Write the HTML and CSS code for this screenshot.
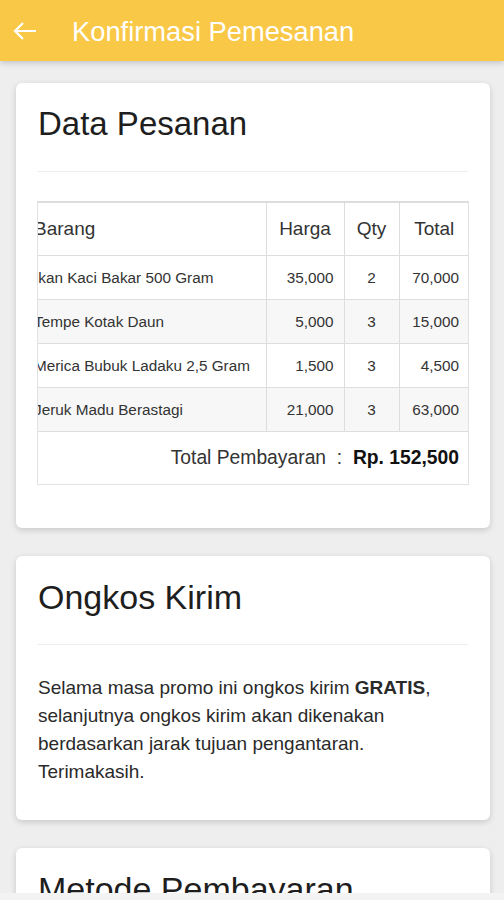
FILE: index.html
```html
<!DOCTYPE html>
<html lang="id">
<head>
    <meta charset="UTF-8">
    <meta name="viewport" content="width=device-width, initial-scale=1.0">
    <title>Konfirmasi Pemesanan</title>
    <link rel="stylesheet" href="styles.css">
</head>
<body>
    <div class="topbar">
        <svg class="back" width="24" height="18" viewBox="0 0 24 18">
            <path d="M23 9H2M10 1L2 9l8 8" fill="none" stroke="#fff" stroke-width="2.2"/>
        </svg>
        <span class="topbar-title">Konfirmasi Pemesanan</span>
    </div>

    <div class="content">
        <div class="card">
            <h2 class="card-title">Data Pesanan</h2>
            <div class="line"></div>
            <div class="order">
                <table class="items">
                    <colgroup>
                        <col class="c-name"><col class="c-price"><col class="c-qty"><col class="c-total">
                    </colgroup>
                    <thead>
                        <tr><th class="left">Barang</th><th>Harga</th><th>Qty</th><th>Total</th></tr>
                    </thead>
                    <tbody>
                        <tr><td>Ikan Kaci Bakar 500 Gram</td><td class="num">35,000</td><td class="mid">2</td><td class="num">70,000</td></tr>
                        <tr><td>Tempe Kotak Daun</td><td class="num">5,000</td><td class="mid">3</td><td class="num">15,000</td></tr>
                        <tr><td>Merica Bubuk Ladaku 2,5 Gram</td><td class="num">1,500</td><td class="mid">3</td><td class="num">4,500</td></tr>
                        <tr><td>Jeruk Madu Berastagi</td><td class="num">21,000</td><td class="mid">3</td><td class="num">63,000</td></tr>
                    </tbody>
                </table>
                <div class="sum">Total Pembayaran &nbsp;:&nbsp; <b>Rp. 152,500</b></div>
            </div>
        </div>

        <div class="card">
            <h2 class="card-title big">Ongkos Kirim</h2>
            <div class="line"></div>
            <p class="note">Selama masa promo ini ongkos kirim <b>GRATIS</b>, selanjutnya ongkos kirim akan dikenakan berdasarkan jarak tujuan pengantaran. Terimakasih.</p>
        </div>

        <div class="card">
            <h2 class="card-title big">Metode Pembayaran</h2>
            <div class="line"></div>
        </div>
    </div>
    <div class="bottom-strip"></div>
</body>
</html>
```

FILE: styles.css
```css
body{
    margin: 0;
    background-color: #eeeeee;
    font-family: "Liberation Sans", Arial, sans-serif;
    color: #222;
    overflow: hidden;
}

.topbar{
    height: 61px;
    background-color: #f9c847;
    display: flex;
    align-items: center;
    padding-left: 13px;
    box-shadow: 0 2px 6px rgba(0, 0, 0, 0.18);
    position: relative;
    z-index: 2;
}
.back{
    display: block;
    margin-top: 1px;
}
.topbar-title{
    color: #fff;
    font-size: 27.3px;
    margin-left: 35px;
    margin-top: 2px;
}

.content{
    padding: 22px 14px 0 16px;
}

.card{
    background: #fff;
    border-radius: 6px;
    box-shadow: 0 2px 6px rgba(0, 0, 0, 0.16);
    padding: 23px 21px 43px 21px;
    margin-bottom: 28px;
}
.card-title{
    margin: 0 0 0 1px;
    font-size: 33px;
    line-height: 36px;
    font-weight: normal;
    color: #1e1e1e;
}
.card-title.big{
    font-size: 34px;
}
.line{
    height: 1px;
    background: #ececec;
    margin: 29px 1px 0;
}

.order{
    margin-top: 29px;
    border: 1px solid #e2e2e2;
    border-top: 2px solid #dddddd;
    overflow: hidden;
    color: #333;
}
.items{
    border-collapse: collapse;
    table-layout: fixed;
    width: 444px;
    margin-left: -13px;
}
.c-name{ width: 241px; }
.c-price{ width: 78px; }
.c-qty{ width: 55px; }
.c-total{ width: 70px; }

.items th{
    height: 52px;
    font-size: 19px;
    font-weight: normal;
    text-align: center;
    padding: 0;
    border-right: 1px solid #dddddd;
    border-bottom: 1px solid #dddddd;
}
.items th.left{
    text-align: left;
    padding-left: 9px;
}
.items td{
    height: 43px;
    font-size: 15.3px;
    padding: 0 10px 0 9px;
    white-space: nowrap;
    overflow: hidden;
    border-right: 1px solid #dddddd;
    border-bottom: 1px solid #dddddd;
}
.items th:last-child, .items td:last-child{
    border-right: none;
}
.items tbody tr:nth-child(even){
    background: #f7f7f7;
}
.items td.num{
    text-align: right;
}
.items td.mid{
    text-align: center;
    padding: 0;
}

.sum{
    height: 52px;
    line-height: 52px;
    font-size: 19.3px;
    text-align: right;
    padding-right: 9px;
    color: #333;
}
.sum b{
    color: #111;
}

.note{
    margin: 29px 0 0 1px;
    font-size: 19px;
    line-height: 28px;
    color: #2a2a2a;
}
.card:nth-child(2){
    padding-bottom: 34px;
}

.bottom-strip{
    position: fixed;
    left: 0;
    right: 0;
    bottom: 0;
    height: 7px;
    background: #f3f3f3;
}
```
